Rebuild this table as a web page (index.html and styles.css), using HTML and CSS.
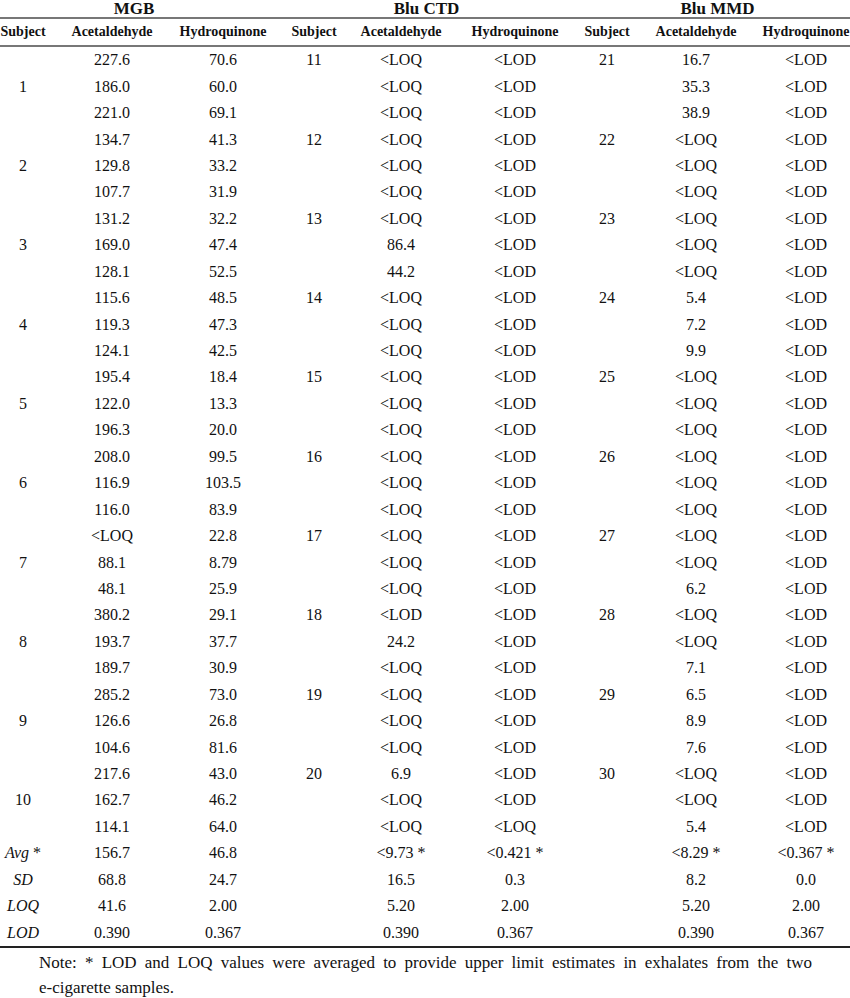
FILE: index.html
```html
<!DOCTYPE html>
<html lang="en">
<head>
<meta charset="utf-8">
<title>Exhalate concentrations</title>
<link rel="stylesheet" href="styles.css">
</head>
<body>
<table class="data">
  <colgroup>
    <col class="w1"><col class="w2"><col class="w3"><col class="w4"><col class="w5"><col class="w6"><col class="w7"><col class="w8"><col class="w9">
  </colgroup>
  <thead>
    <tr class="groups">
      <th colspan="3" class="g g1">MGB</th>
      <th colspan="3" class="g g2">Blu CTD</th>
      <th colspan="3" class="g g3">Blu MMD</th>
    </tr>
    <tr class="cols">
      <th>Subject</th><th>Acetaldehyde</th><th>Hydroquinone</th>
      <th>Subject</th><th>Acetaldehyde</th><th>Hydroquinone</th>
      <th>Subject</th><th>Acetaldehyde</th><th>Hydroquinone</th>
    </tr>
  </thead>
  <tbody>
    <tr><td></td><td>227.6</td><td>70.6</td><td>11</td><td>&lt;LOQ</td><td>&lt;LOD</td><td>21</td><td>16.7</td><td>&lt;LOD</td></tr>
    <tr><td>1</td><td>186.0</td><td>60.0</td><td></td><td>&lt;LOQ</td><td>&lt;LOD</td><td></td><td>35.3</td><td>&lt;LOD</td></tr>
    <tr><td></td><td>221.0</td><td>69.1</td><td></td><td>&lt;LOQ</td><td>&lt;LOD</td><td></td><td>38.9</td><td>&lt;LOD</td></tr>
    <tr><td></td><td>134.7</td><td>41.3</td><td>12</td><td>&lt;LOQ</td><td>&lt;LOD</td><td>22</td><td>&lt;LOQ</td><td>&lt;LOD</td></tr>
    <tr><td>2</td><td>129.8</td><td>33.2</td><td></td><td>&lt;LOQ</td><td>&lt;LOD</td><td></td><td>&lt;LOQ</td><td>&lt;LOD</td></tr>
    <tr><td></td><td>107.7</td><td>31.9</td><td></td><td>&lt;LOQ</td><td>&lt;LOD</td><td></td><td>&lt;LOQ</td><td>&lt;LOD</td></tr>
    <tr><td></td><td>131.2</td><td>32.2</td><td>13</td><td>&lt;LOQ</td><td>&lt;LOD</td><td>23</td><td>&lt;LOQ</td><td>&lt;LOD</td></tr>
    <tr><td>3</td><td>169.0</td><td>47.4</td><td></td><td>86.4</td><td>&lt;LOD</td><td></td><td>&lt;LOQ</td><td>&lt;LOD</td></tr>
    <tr><td></td><td>128.1</td><td>52.5</td><td></td><td>44.2</td><td>&lt;LOD</td><td></td><td>&lt;LOQ</td><td>&lt;LOD</td></tr>
    <tr><td></td><td>115.6</td><td>48.5</td><td>14</td><td>&lt;LOQ</td><td>&lt;LOD</td><td>24</td><td>5.4</td><td>&lt;LOD</td></tr>
    <tr><td>4</td><td>119.3</td><td>47.3</td><td></td><td>&lt;LOQ</td><td>&lt;LOD</td><td></td><td>7.2</td><td>&lt;LOD</td></tr>
    <tr><td></td><td>124.1</td><td>42.5</td><td></td><td>&lt;LOQ</td><td>&lt;LOD</td><td></td><td>9.9</td><td>&lt;LOD</td></tr>
    <tr><td></td><td>195.4</td><td>18.4</td><td>15</td><td>&lt;LOQ</td><td>&lt;LOD</td><td>25</td><td>&lt;LOQ</td><td>&lt;LOD</td></tr>
    <tr><td>5</td><td>122.0</td><td>13.3</td><td></td><td>&lt;LOQ</td><td>&lt;LOD</td><td></td><td>&lt;LOQ</td><td>&lt;LOD</td></tr>
    <tr><td></td><td>196.3</td><td>20.0</td><td></td><td>&lt;LOQ</td><td>&lt;LOD</td><td></td><td>&lt;LOQ</td><td>&lt;LOD</td></tr>
    <tr><td></td><td>208.0</td><td>99.5</td><td>16</td><td>&lt;LOQ</td><td>&lt;LOD</td><td>26</td><td>&lt;LOQ</td><td>&lt;LOD</td></tr>
    <tr><td>6</td><td>116.9</td><td>103.5</td><td></td><td>&lt;LOQ</td><td>&lt;LOD</td><td></td><td>&lt;LOQ</td><td>&lt;LOD</td></tr>
    <tr><td></td><td>116.0</td><td>83.9</td><td></td><td>&lt;LOQ</td><td>&lt;LOD</td><td></td><td>&lt;LOQ</td><td>&lt;LOD</td></tr>
    <tr><td></td><td>&lt;LOQ</td><td>22.8</td><td>17</td><td>&lt;LOQ</td><td>&lt;LOD</td><td>27</td><td>&lt;LOQ</td><td>&lt;LOD</td></tr>
    <tr><td>7</td><td>88.1</td><td>8.79</td><td></td><td>&lt;LOQ</td><td>&lt;LOD</td><td></td><td>&lt;LOQ</td><td>&lt;LOD</td></tr>
    <tr><td></td><td>48.1</td><td>25.9</td><td></td><td>&lt;LOQ</td><td>&lt;LOD</td><td></td><td>6.2</td><td>&lt;LOD</td></tr>
    <tr><td></td><td>380.2</td><td>29.1</td><td>18</td><td>&lt;LOD</td><td>&lt;LOD</td><td>28</td><td>&lt;LOQ</td><td>&lt;LOD</td></tr>
    <tr><td>8</td><td>193.7</td><td>37.7</td><td></td><td>24.2</td><td>&lt;LOD</td><td></td><td>&lt;LOQ</td><td>&lt;LOD</td></tr>
    <tr><td></td><td>189.7</td><td>30.9</td><td></td><td>&lt;LOQ</td><td>&lt;LOD</td><td></td><td>7.1</td><td>&lt;LOD</td></tr>
    <tr><td></td><td>285.2</td><td>73.0</td><td>19</td><td>&lt;LOQ</td><td>&lt;LOD</td><td>29</td><td>6.5</td><td>&lt;LOD</td></tr>
    <tr><td>9</td><td>126.6</td><td>26.8</td><td></td><td>&lt;LOQ</td><td>&lt;LOD</td><td></td><td>8.9</td><td>&lt;LOD</td></tr>
    <tr><td></td><td>104.6</td><td>81.6</td><td></td><td>&lt;LOQ</td><td>&lt;LOD</td><td></td><td>7.6</td><td>&lt;LOD</td></tr>
    <tr><td></td><td>217.6</td><td>43.0</td><td>20</td><td>6.9</td><td>&lt;LOD</td><td>30</td><td>&lt;LOQ</td><td>&lt;LOD</td></tr>
    <tr><td>10</td><td>162.7</td><td>46.2</td><td></td><td>&lt;LOQ</td><td>&lt;LOD</td><td></td><td>&lt;LOQ</td><td>&lt;LOD</td></tr>
    <tr><td></td><td>114.1</td><td>64.0</td><td></td><td>&lt;LOQ</td><td>&lt;LOQ</td><td></td><td>5.4</td><td>&lt;LOD</td></tr>
    <tr><td><i>Avg</i> *</td><td>156.7</td><td>46.8</td><td></td><td>&lt;9.73 *</td><td>&lt;0.421 *</td><td></td><td>&lt;8.29 *</td><td>&lt;0.367 *</td></tr>
    <tr><td><i>SD</i></td><td>68.8</td><td>24.7</td><td></td><td>16.5</td><td>0.3</td><td></td><td>8.2</td><td>0.0</td></tr>
    <tr><td><i>LOQ</i></td><td>41.6</td><td>2.00</td><td></td><td>5.20</td><td>2.00</td><td></td><td>5.20</td><td>2.00</td></tr>
    <tr class="last"><td><i>LOD</i></td><td>0.390</td><td>0.367</td><td></td><td>0.390</td><td>0.367</td><td></td><td>0.390</td><td>0.367</td></tr>
  </tbody>
</table>
<p class="note">Note: * LOD and LOQ values were averaged to provide upper limit estimates in exhalates from the two <span class="nobr">e-cigarette</span> samples.</p>
</body>
</html>
```

FILE: styles.css
```css
html, body {
  margin: 0;
  padding: 0;
  background: #ffffff;
}

body {
  width: 850px;
  font-family: "Liberation Serif", "Times New Roman", serif;
  color: #111111;
}

.data {
  width: 850px;
  table-layout: fixed;
  border-collapse: collapse;
  border-spacing: 0;
}

.w1 { width: 67px; }
.w2 { width: 100px; }
.w3 { width: 101px; }
.w4 { width: 89px; }
.w5 { width: 101px; }
.w6 { width: 103px; }
.w7 { width: 90px; }
.w8 { width: 100px; }
.w9 { width: 99px; }

.data th,
.data td {
  padding: 0;
  text-align: center;
  white-space: nowrap;
}

.groups .g {
  height: 16px;
  font-size: 17px;
  font-weight: bold;
  line-height: 17px;
  vertical-align: bottom;
  border-bottom: 2px solid #777777;
}

.groups .g2,
.groups .g3 {
  padding-left: 24px;
}

.cols th {
  height: 26px;
  font-size: 14px;
  font-weight: bold;
  line-height: 14px;
  vertical-align: middle;
  border-bottom: 2px solid #777777;
}

.data td {
  height: 26.45px;
  font-size: 16px;
  line-height: 16px;
  vertical-align: middle;
}

.data td i {
  font-style: italic;
}

.last td {
  border-bottom: 2px solid #222222;
}

/* per-column horizontal centring offsets */
.cols th:nth-child(1), .data td:nth-child(1) { padding-right: 21px; }
.cols th:nth-child(2), .data td:nth-child(2) { padding-right: 10px; }
.cols th:nth-child(3), .data td:nth-child(3) { padding-left: 11px; }
.cols th:nth-child(4), .data td:nth-child(4) { padding-left: 3px; }
.cols th:nth-child(5), .data td:nth-child(5) { padding-right: 13px; }
.cols th:nth-child(6), .data td:nth-child(6) { padding-left: 11px; }
.cols th:nth-child(7), .data td:nth-child(7) { padding-left: 2px; }
.cols th:nth-child(8), .data td:nth-child(8) { padding-right: 10px; }
.cols th:nth-child(9), .data td:nth-child(9) { padding-left: 11px; }

.note {
  margin: 2px 0 0 39px;
  width: 773px;
  font-size: 17px;
  line-height: 25px;
  text-align: justify;
}

.nobr {
  white-space: nowrap;
}
```
